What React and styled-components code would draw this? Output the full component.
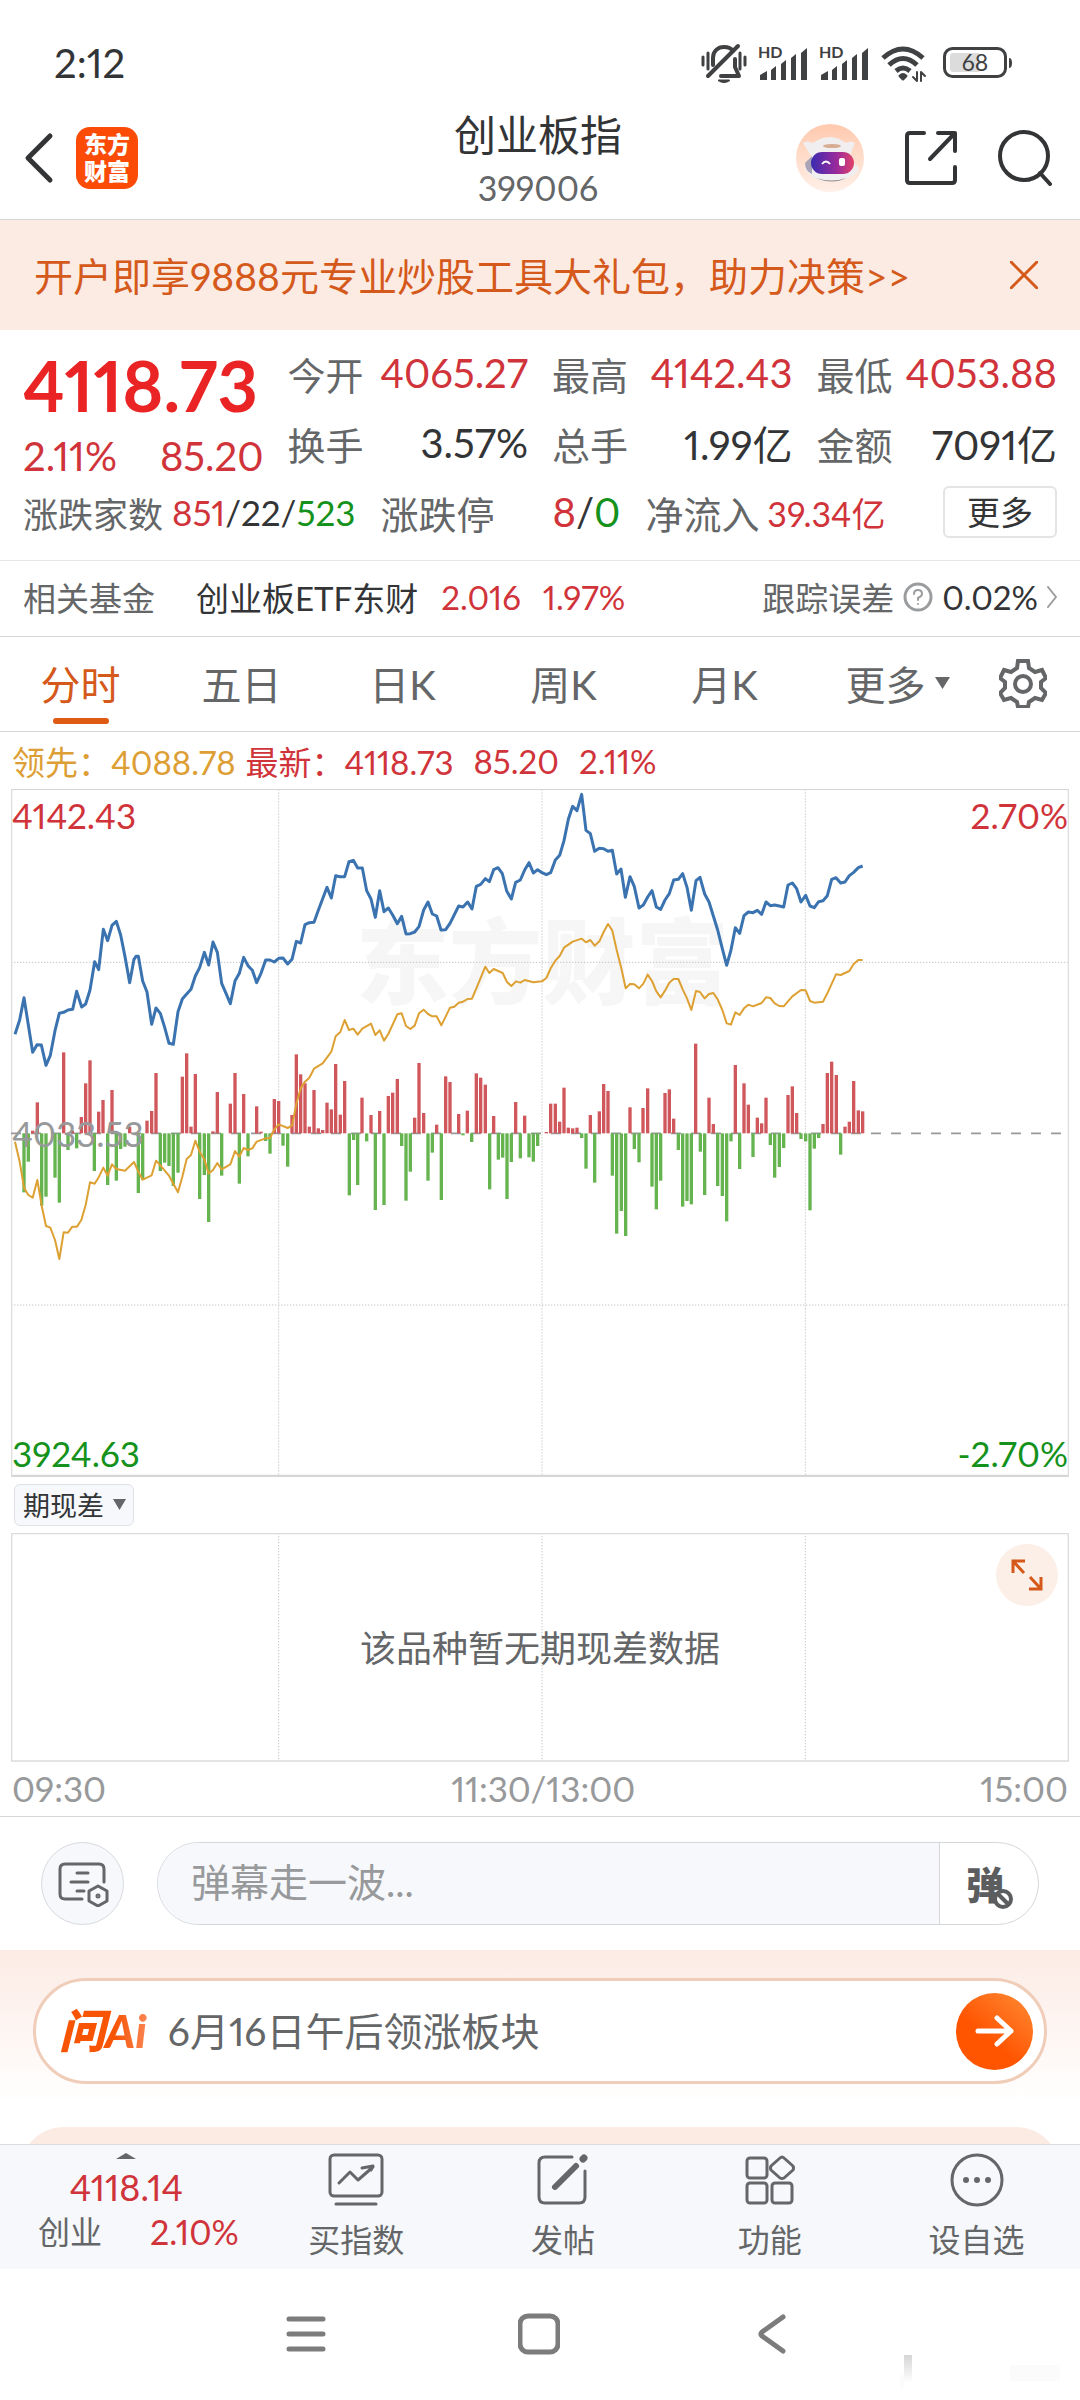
import React from 'react';
import styled, { createGlobalStyle, css } from 'styled-components';

const color = {
  text: '#333436',
  secondary: '#646668',
  muted: '#97999b',
  red: '#d0343a',
  green: '#15921b',
  orange: '#d4591b',
  gold: '#dd9f35',
  line: '#d6d6d6',
  peach: '#fbebe3',
  bar: '#f6f8fb',
};

const GlobalStyle = createGlobalStyle`
  * { box-sizing: border-box; }
  body {
    margin: 0;
    background: #fff;
    color: ${color.text};
    font-family: Lato, 'Noto Sans CJK SC', sans-serif;
    font-variant-numeric: proportional-nums;
  }
  button, input {
    font: inherit;
    color: inherit;
    margin: 0;
    padding: 0;
    border: 0;
    background: none;
    outline: none;
  }
  button { cursor: pointer; }
  svg { display: block; flex: none; }
`;

const tone = css`
  color: ${({ $tone }) => color[$tone || 'text']};
`;

const Page = styled.div`
  width: 100%;
  overflow: hidden;
`;

/* status bar and header */

const StatusBar = styled.div`
  display: flex;
  align-items: center;
  justify-content: space-between;
  height: 96px;
  padding: 30px 68px 0 54px;
  font-size: 40px;
  line-height: 66px;
`;

const StatusIcons = styled.div`
  display: flex;
  align-items: center;
  gap: 11px;
`;

const Header = styled.header`
  display: grid;
  grid-template-columns: 1fr auto 1fr;
  align-items: center;
  height: 124px;
  padding: 0 28px 0 24px;
  border-bottom: 1px solid ${color.line};
`;

const HeaderSide = styled.div`
  display: flex;
  align-items: center;
  justify-content: ${({ $end }) => ($end ? 'flex-end' : 'flex-start')};
  gap: ${({ $end }) => ($end ? '40px' : '22px')};
`;

const Logo = styled.a`
  display: flex;
  flex-direction: column;
  align-items: center;
  justify-content: center;
  width: 62px;
  height: 62px;
  border-radius: 14px;
  background: #fb4b06;
  color: #fff;
  font-size: 23px;
  font-weight: 900;
  line-height: 27px;
  text-decoration: none;
`;

const Title = styled.div`
  padding-top: 4px;
  text-align: center;

  h1 {
    margin: 0;
    font-size: 42px;
    font-weight: 400;
    line-height: 56px;
  }
  span {
    display: block;
    font-size: 34px;
    line-height: 50px;
    color: ${color.secondary};
  }
`;

const Banner = styled.div`
  display: flex;
  align-items: center;
  justify-content: space-between;
  height: 110px;
  padding: 0 42px 0 34px;
  background: ${color.peach};
  color: ${color.orange};

  a {
    padding-bottom: 3px;
    color: inherit;
    font-size: 39px;
    text-decoration: none;
    white-space: nowrap;
  }
`;

/* quote figures */

const Quote = styled.section`
  padding: 8px 23px 14px;
  border-bottom: 1px solid #e6e6e6;
`;

const QuoteGrid = styled.div`
  display: grid;
  grid-template-columns: repeat(4, 1fr);
  grid-auto-rows: 70px;
  column-gap: 24px;
`;

const Price = styled.div`
  grid-row: span 2;
  color: ${color.red};

  strong {
    display: block;
    font-size: 70px;
    line-height: 94px;
    color: #ea2424;
  }
  div {
    display: flex;
    justify-content: space-between;
    font-size: 40px;
    line-height: 48px;
  }
`;

const Stat = styled.div`
  display: flex;
  align-items: center;
  justify-content: space-between;
  font-size: ${({ $small }) => ($small ? '35px' : '38px')};
  white-space: nowrap;
  ${({ $fixed }) => $fixed && 'width: 240px;'}
`;

const Label = styled.span`
  color: ${color.secondary};
  ${({ $small }) => $small && 'font-size: 32px;'}
`;

const Value = styled.span`
  font-size: ${({ $small }) => ($small ? '34px' : '40px')};
  ${tone}
`;

const QuoteRow = styled.div`
  display: flex;
  align-items: center;
  gap: 25px;
  height: 68px;
`;

const MoreButton = styled.button`
  width: 114px;
  height: 52px;
  margin-left: auto;
  border: 2px solid #e4e4e6;
  border-radius: 6px;
  font-size: 33px;
  line-height: 46px;
`;

const FundRow = styled.a`
  display: flex;
  align-items: center;
  height: 76px;
  padding: 0 22px 3px 23px;
  border-bottom: 1px solid ${color.line};
  font-size: 33px;
  color: ${color.text};
  text-decoration: none;
  white-space: nowrap;
`;

const FundName = styled.span`
  margin: 0 23px 0 41px;
`;

const FundError = styled.span`
  display: flex;
  align-items: center;
  gap: 9px;
  margin-left: auto;
`;

const Num = styled.span`
  ${tone}
  margin-right: ${({ $gap }) => $gap || 0}px;
`;

/* period tabs */

const Tabs = styled.nav`
  display: grid;
  grid-template-columns: repeat(5, 161fr) 185fr 66fr;
  height: 95px;
  padding-right: 24px;
  border-bottom: 1px solid ${color.line};
`;

const Tab = styled.button`
  position: relative;
  display: flex;
  align-items: center;
  justify-content: center;
  gap: 9px;
  padding-bottom: 3px;
  font-size: 40px;
  white-space: nowrap;
  color: ${({ $active }) => ($active ? color.orange : color.secondary)};

  &::after {
    content: '';
    display: ${({ $active }) => ($active ? 'block' : 'none')};
    position: absolute;
    bottom: 7px;
    width: 56px;
    height: 6px;
    border-radius: 3px;
    background: #df5a12;
  }
`;

const Legend = styled.div`
  display: flex;
  align-items: center;
  height: 57px;
  padding: 0 12px;
  font-size: 33px;
  white-space: nowrap;
`;

/* charts */

const Chart = styled.div`
  position: relative;
  margin: 0 11px;

  > svg {
    width: 100%;
    height: auto;
  }
`;

const Mark = styled.span`
  position: absolute;
  font-size: 35px;
  line-height: 44px;
  ${tone}
  ${({ $at }) => $at}
`;

const IndicatorBar = styled.div`
  display: flex;
  align-items: center;
  height: 56px;
  padding: 0 14px;
`;

const Indicator = styled.button`
  display: flex;
  align-items: center;
  gap: 9px;
  height: 42px;
  padding: 0 7px 2px 8px;
  border: 1px solid #dfe1e5;
  border-radius: 6px;
  background: ${color.bar};
  font-size: 27px;
`;

const Empty = styled.p`
  position: absolute;
  inset: 0;
  display: flex;
  align-items: center;
  justify-content: center;
  margin: 0;
  padding-bottom: 4px;
  font-size: 36px;
  color: ${color.secondary};
`;

const Expand = styled.button`
  position: absolute;
  top: 11px;
  right: 11px;
  display: grid;
  place-items: center;
  width: 62px;
  height: 62px;
  border-radius: 50%;
  background: #fcefe7;
`;

const TimeAxis = styled.div`
  display: flex;
  align-items: center;
  justify-content: space-between;
  height: 55px;
  padding: 0 12px 2px;
  border-bottom: 1px solid ${color.line};
  font-size: 35px;
  color: ${color.muted};
`;

/* comments and assistant */

const CommentRow = styled.form`
  display: flex;
  gap: 33px;
  height: 133px;
  padding: 25px 41px 0;
`;

const RoundButton = styled.button`
  display: grid;
  place-items: center;
  flex: none;
  width: 83px;
  height: 83px;
  border: 1px solid #d8dae0;
  border-radius: 50%;
  background: ${color.bar};
`;

const CommentBox = styled.div`
  display: flex;
  flex: 1;
  height: 83px;
  border: 1px solid #d4d8dc;
  border-radius: 42px;
  overflow: hidden;

  input {
    flex: 1;
    min-width: 0;
    padding: 0 0 4px 33px;
    background: ${color.bar};
    font-size: 39px;
  }
  input::placeholder {
    color: ${color.muted};
    opacity: 1;
  }
  button {
    position: relative;
    width: 99px;
    padding-right: 8px;
    border-left: 1px solid ${color.line};
    font-size: 38px;
    font-weight: 900;
    line-height: 72px;
    color: #5b5d5f;
  }
  svg {
    position: absolute;
    right: 24px;
    bottom: 14px;
  }
`;

const Assistant = styled.section`
  height: 194px;
  padding: 28px 33px 0;
  background: linear-gradient(#fcebe4, #fff 80%);
  overflow: hidden;
`;

const Ask = styled.a`
  display: flex;
  align-items: center;
  height: 106px;
  padding: 0 11px 0 23px;
  border: 3px solid #f0cdb9;
  border-radius: 53px;
  background: #fff;
  color: ${color.secondary};
  font-size: 39px;
  text-decoration: none;
`;

const AskLogo = styled.b`
  padding-right: 4px;
  margin-right: 17px;
  background: linear-gradient(90deg, #f75403 60%, #fb8a5c);
  background-clip: text;
  color: transparent;
  font-size: 46px;
  font-style: italic;
  font-weight: 900;
  line-height: 60px;
`;

const AskText = styled.span`
  padding-bottom: 4px;
`;

const Go = styled.span`
  display: grid;
  place-items: center;
  width: 77px;
  height: 77px;
  margin-left: auto;
  border-radius: 50%;
  background: linear-gradient(40deg, #ff5400 40%, #ff8c36);
`;

const NextCard = styled.div`
  height: 60px;
  margin: 43px -13px 0;
  border-radius: 44px 44px 0 0;
  background: ${color.peach};
`;

/* bottom bars */

const BottomBar = styled.nav`
  display: grid;
  grid-template-columns: 253fr repeat(4, 207fr);
  height: 125px;
  border-top: 1px solid #d9dce0;
  background: ${color.bar};
`;

const Ticker = styled.button`
  display: flex;
  flex-direction: column;
  align-items: center;
  padding: 8px 14px 0 38px;
  color: ${color.red};

  b {
    width: 100%;
    padding-right: 24px;
    margin-top: 5px;
    font-size: 36px;
    font-weight: 400;
    line-height: 46px;
  }
  svg {
    margin-right: 24px;
  }
  div {
    display: flex;
    justify-content: space-between;
    width: 100%;
    font-size: 34px;
    line-height: 44px;
  }
`;

const Action = styled.button`
  display: flex;
  flex-direction: column;
  align-items: center;
  gap: 9px;
  padding-top: 8px;
  font-size: 32px;
  line-height: 48px;
  color: ${color.secondary};
`;

const SystemNav = styled.div`
  position: relative;
  display: flex;
  align-items: center;
  justify-content: space-between;
  height: 130px;
  padding: 0 286px 0 284px;
`;

const Smudge = styled.div`
  position: absolute;
  right: 10px;
  bottom: 6px;
`;

const Stroke = ({ w, h = w, box, sw = 3, stroke = color.secondary, children }) => (
  <svg width={w} height={h} viewBox={box || `0 0 ${w} ${h}`} fill="none" stroke={stroke}
    strokeWidth={sw} strokeLinecap="round" strokeLinejoin="round" aria-hidden="true">
    {children}
  </svg>
);

const BellOff = () => (
  <Stroke w={46} h={40} sw={4} stroke="#3f4143">
    <path d="M2 14v8M7 10v16M39 10v16M44 14v8" strokeWidth="3" />
    <path d="M12 22V15C12 8 17 4 23 4c4 0 7 1 9 4M34 16v8l4 9H20" />
    <path d="M37 3L7 33" />
    <path d="M18 37.500h10q-5 3-10 0" strokeWidth="2" fill="#3f4143" />
  </Stroke>
);

const Signal = () => (
  <svg width="50" height="48" viewBox="0 -5 50 48" fill="#3f4143" aria-hidden="true">
    <text x="0" y="14" fontSize="16" fontWeight="700" fontFamily="Lato, sans-serif">HD</text>
    <path d="M2 36v-5l7-4v9zM13 36V26l5-4v14zM23 36V20l5-4v20zM33 36V14l5-4v26zM43 36V9l6-5v32z" />
  </svg>
);

const Wifi = () => (
  <Stroke w={52} h={40} sw={5} stroke="#3f4143">
    <path d="M3 15Q23-3 43 15M9 22Q23 9 37 22M16 28q7-6 14 0" strokeLinecap="butt" />
    <path d="M20 33q3-3 6 0l-3 3z" strokeWidth="3" fill="#3f4143" />
    <path d="M37 29v9l-4-4M41 38v-9l4 4" strokeWidth="2" />
  </Stroke>
);

const Battery = () => (
  <svg width="69" height="32" viewBox="0 0 69 32" aria-hidden="true">
    <rect x="1.500" y="1.500" width="61" height="28" rx="8" fill="#fff" stroke="#3f4143" strokeWidth="3" />
    <path d="M10 6h26v19H10q-3 0-3-3V9q0-3 3-3z" fill="#dcdcdc" />
    <path d="M66 11q3 0 3 5t-3 5z" fill="#3f4143" />
    <text x="32" y="24" textAnchor="middle" fontSize="23" fontFamily="Lato, sans-serif" fill="#3f4143">68</text>
  </svg>
);

const Robot = () => (
  <svg width="68" height="70" viewBox="0 0 68 70" aria-hidden="true">
    <defs>
      <linearGradient id="visor"><stop offset="0" stopColor="#3a2bb0" /><stop offset=".6" stopColor="#9a2a9c" /><stop offset="1" stopColor="#e0436a" /></linearGradient>
      <linearGradient id="halo" x2="0" y2="1"><stop offset="0" stopColor="#ffc9ae" /><stop offset="1" stopColor="#fff0e8" /></linearGradient>
    </defs>
    <circle cx="34" cy="35" r="34" fill="url(#halo)" />
    <path d="M7 20q4-3 10 0 17-12 33 0 5-3 9 0l-3 7-2 8 8 9q2 4-3 7-8 7-25 7-16 0-22-8-5-4-3-8l6-9z" fill="#f1eeef" />
    <ellipse cx="36" cy="23" rx="9" ry="2" fill="#d6ac92" />
    <path d="M9 40l7-7v18q-7-3-7-11z" fill="#a9a4b6" />
    <rect x="15" y="29" width="43" height="22" rx="11" fill="url(#visor)" />
    <path d="M26 41q4-5 8 0" fill="none" stroke="#fff" strokeWidth="2" />
    <rect x="43" y="35" width="6" height="8" rx="2" fill="#fff" />
    <path d="M20 55q16 5 30 0-13 7-30 0z" fill="#8f8b94" />
  </svg>
);

const Caret = ({ w = 15, h = 12, up }) => (
  <svg width={w} height={h} viewBox="0 0 10 10" preserveAspectRatio="none" fill={color.secondary} aria-hidden="true">
    <path d={up ? 'M0 10h10L5 0z' : 'M0 0h10L5 10z'} />
  </svg>
);

// The plot uses three units for one pixel; the second half of a series starts at x = 1260.
const SPLIT = 1260;
const pairs = (str) => str.trim().split(/\s+/).map((p) => p.split(',').map(Number));
const series = (early, late) => [
  ...pairs(early),
  ...pairs(late).map(([x, y]) => [x + SPLIT, y]),
];

const priceLine = series(
  `45,763 59,720 72,653 98,817 111,794 124,795 138,856 151,826 165,752 178,700 191,697 204,690 218,688 230,634 245,681
   257,672 270,630 284,545 296,569 310,448 323,482 336,436 349,424 362,465 375,530 389,608 402,538 408,529 415,529
   428,603 441,636 455,733 468,684 481,700 494,742 507,790 520,793 534,695 547,657 560,642 573,628 586,588 599,563
   613,517 626,555 639,486 652,517 665,610 678,640 691,671 705,603 718,580 731,532 744,557 757,571 770,608 783,580
   797,540 810,540 823,546 836,535 849,534 863,552 876,538 889,484 902,489 915,434 928,428 942,427 955,391 968,356
   981,322 994,354 1007,287 1020,290 1034,290 1047,245 1060,241 1073,264 1087,264 1100,332 1113,357 1126,412 1139,332
   1152,395 1165,384 1178,405 1192,431 1205,409 1218,462 1231,461 1244,456 1257,440 1271,390 1284,366 1297,402
   1310,408 1323,450`,
  `77,449 90,430 116,378 129,381 143,366 156,387 169,319 182,313 196,296 208,305 221,269 234,263 247,281 260,333
   274,357 287,307 301,300 314,270 327,248 340,279 353,269 366,278 379,284 392,278 406,240 419,226 432,182 445,118
   458,79 471,92 485,43 498,151 511,161 524,214 538,205 551,206 564,214 577,211 590,282 603,267 616,352 630,290
   643,320 657,384 670,375 683,351 696,332 709,381 722,388 735,360 748,341 761,300 775,298 788,281 801,322 814,391
   828,302 840,292 854,342 867,366 880,408 893,450 906,502 920,556 933,510 946,443 959,460 972,407 985,396 999,398
   1012,391 1025,403 1038,366 1051,377 1064,375 1078,378 1091,381 1104,315 1117,309 1130,326 1143,366 1157,346
   1170,378 1183,383 1196,365 1209,362 1222,347 1235,298 1248,293 1262,309 1275,306 1288,287 1301,277 1315,263 1328,258`
);

const leadLine = series(
  `45,1085 59,1145 72,1223 85,1245 98,1253 112,1200 125,1277 138,1338 151,1343 165,1380 178,1437 191,1357 204,1358
   217,1340 231,1340 244,1320 257,1275 270,1207 284,1211 297,1190 310,1163 323,1187 336,1153 349,1167 375,1172
   402,1146 415,1175 428,1199 455,1186 468,1142 481,1156 507,1187 534,1237 547,1190 560,1137 573,1125 586,1082
   599,1115 613,1138 626,1180 639,1170 652,1149 665,1168 691,1153 705,1113 718,1130 731,1104 744,1110 757,1105
   770,1085 797,1075 810,1074 823,1048 836,1033 863,1044 876,1037 889,972 902,925 915,905 928,893 942,866 968,850
   994,815 1007,769 1021,756 1034,720 1047,750 1060,746 1073,764 1087,746 1113,731 1126,765 1139,751 1152,782
   1165,762 1192,703 1205,700 1218,738 1231,747 1244,737 1257,700 1271,689 1284,702 1297,709 1310,709 1324,736`,
  `77,710 90,683 103,680 116,668 129,665 143,657 156,656 169,625 196,560 208,579 221,567 248,579 261,606 274,618
   288,604 301,608 314,600 340,607 366,604 379,594 392,565 406,542 419,528 432,503 458,485 485,476 498,487 511,480
   524,497 538,484 551,456 564,432 577,452 590,510 604,565 617,625 630,612 643,613 657,625 670,611 683,584 696,603
   709,634 722,652 735,632 748,608 761,597 775,597 788,628 801,655 814,690 828,633 840,636 854,655 867,642 880,639
   893,658 907,690 920,730 933,734 946,697 959,705 972,685 985,674 999,679 1025,669 1038,652 1051,654 1064,670
   1078,678 1091,679 1117,649 1143,630 1157,631 1170,663 1183,668 1209,665 1222,640 1248,583 1262,585 1288,573
   1301,552 1315,540 1328,540`
);

const BASE = 1060;
const bars = series(
  `98,1052 112,967 191,817 217,1052 244,1011 257,910 270,841 296,995 309,960 336,930 389,1040 441,1022 455,993 468,879
   547,890 560,820 573,1040 586,882 639,1054 652,936 691,971 705,879 731,942 770,979 783,1055 823,957 836,963 876,1005
   889,823 902,883 915,910 928,1040 942,930 955,1045 968,1050 981,968 994,988 1007,852 1021,1004 1034,903 1086,953
   1113,1005 1139,993 1165,948 1178,938 1192,897 1244,1013 1257,849 1271,999 1310,1034 72,1237 85,1145 125,1277
   138,1250 165,1193 178,1268 204,1110 230,1105 283,1173 323,1215 349,1202 362,1107 375,1100 415,1239 428,1200
   481,1173 494,1148 507,1158 520,1218 534,1178 599,1257 613,1185 626,1326 665,1187 718,1211 744,1129 797,1083
   810,1121 849,1097 863,1160 1048,1246 1061,1080 1073,1215 1100,1084 1126,1290 1152,1275 1205,1098 1218,1262
   1231,1175 1284,1202 1297,1118`,
  `77,889 90,906 116,1002 142,992 169,880 182,893 196,914 221,1008 287,966 314,1007 379,1056 392,971 406,971 419,1025
   432,923 445,1043 458,1045 471,1043 511,1005 538,994 551,912 564,933 630,982 669,984 683,925 735,939 748,928
   761,1016 827,791 867,953 880,1032 946,855 972,910 985,974 1012,1013 1025,1030 1038,953 1104,945 1117,919 1130,999
   1209,1032 1222,879 1235,845 1249,885 1275,1040 1288,1025 1301,903 1315,991 1328,994 64,1260 129,1066 155,1086
   209,1228 235,1139 248,1133 261,1257 274,1146 301,1135 327,1132 340,1145 353,1098 485,1074 498,1166 524,1208
   577,1187 590,1361 604,1293 617,1368 643,1107 657,1147 696,1220 709,1288 722,1202 775,1110 788,1280 801,1263
   814,1273 841,1115 854,1245 893,1218 907,1248 920,1324 933,1084 959,1167 999,1131 1051,1095 1064,1193 1078,1161
   1091,1104 1143,1077 1157,1084 1170,1291 1183,1106 1196,1074 1262,1124`
);

const COLUMNS = [836, 1626, 2416];

const PriceChart = () => (
  <svg viewBox="33 27 3174 2064" aria-label="分时走势">
    <text x="1627" y="650" textAnchor="middle" fontSize="280" fontWeight="900"
      fontFamily="'Noto Sans CJK SC', sans-serif" fill="#f6f6f6">东方财富</text>
    <g stroke="#c4c4c4" strokeWidth="3" strokeDasharray="4 5">
      {COLUMNS.map((x) => <path key={x} d={`M${x} 28V2088`} />)}
      <path d="M33 547H3207M33 1575H3207" />
    </g>
    <path d="M33 2088H3207" stroke={color.line} strokeWidth="7" />
    <path d="M35 28V2088M3205 28V2088" stroke="#dedede" strokeWidth="4" />
    <path d="M33 28H3207" stroke={color.line} strokeWidth="4" />
    <path d={`M33 ${BASE}H3207`} stroke="#98989c" strokeWidth="5" strokeDasharray="30 30" />
    {bars.map(([x, y]) => (
      <path key={x} d={`M${x} ${BASE}V${y}`} stroke={y < BASE ? '#d0575b' : '#66b450'} strokeWidth="10" />
    ))}
    <polyline points={leadLine.join(' ')} fill="none" stroke="#dda032" strokeWidth="6" strokeLinejoin="round" />
    <polyline points={priceLine.join(' ')} fill="none" stroke="#3a73b0" strokeWidth="9" strokeLinejoin="round" />
  </svg>
);

const SpreadChart = () => (
  <svg viewBox="33 0 3174 687" aria-hidden="true">
    <g stroke="#c4c4c4" strokeWidth="3" strokeDasharray="4 5">
      {COLUMNS.map((x) => <path key={x} d={`M${x} 0V684`} />)}
    </g>
    <path d="M35 2H3205V684H35z" fill="none" stroke="#dcdcdc" strokeWidth="4" />
  </svg>
);

const STATS = [
  ['今开', '4065.27', 'red'],
  ['最高', '4142.43', 'red'],
  ['最低', '4053.88', 'red'],
  ['换手', '3.57%'],
  ['总手', '1.99亿'],
  ['金额', '7091亿'],
];

const PERIODS = ['分时', '五日', '日K', '周K', '月K'];

const ACTIONS = [
  {
    label: '买指数',
    icon: (
      <Stroke w={56} h={54}>
        <rect x="2" y="2" width="52" height="41" rx="4" />
        <path d="M11 30l11-11 8 8 15-13M34 15l11-2-2 4M8 51h40" />
      </Stroke>
    ),
  },
  {
    label: '发帖',
    icon: (
      <Stroke w={54} h={54}>
        <path d="M36 4H9q-6 0-6 6v34q0 6 6 6h34q6 0 6-6V18" />
        <path d="M40 13L19 34" strokeWidth="6" />
        <path d="M47 6l1-1" strokeWidth="7" />
      </Stroke>
    ),
  },
  {
    label: '功能',
    icon: (
      <Stroke w={50} h={54}>
        <rect x="2" y="5" width="20" height="20" rx="3" />
        <rect x="2" y="30" width="20" height="20" rx="3" />
        <rect x="27" y="30" width="20" height="20" rx="3" />
        <path d="M35 5q2-2 4 0l9 8q1 2 0 4l-9 8q-2 1-4 0l-9-8q-1-2 0-4z" />
      </Stroke>
    ),
  },
  {
    label: '设自选',
    icon: (
      <Stroke w={54} h={54}>
        <circle cx="27" cy="27" r="25" />
        <path d="M16 27h0M27 27h0M38 27h0" strokeWidth="6" />
      </Stroke>
    ),
  },
];

export default function App() {
  return (
    <Page>
      <GlobalStyle />
      <StatusBar>
        <span>2:12</span>
        <StatusIcons>
          <BellOff />
          <Signal />
          <Signal />
          <Wifi />
          <Battery />
        </StatusIcons>
      </StatusBar>

      <Header>
        <HeaderSide>
          <button aria-label="返回">
            <Stroke w={30} h={52} sw={5} stroke="#333436"><path d="M26 4L4 26l22 22" /></Stroke>
          </button>
          <Logo href="#home"><span>东方</span><span>财富</span></Logo>
        </HeaderSide>
        <Title>
          <h1>创业板指</h1>
          <span>399006</span>
        </Title>
        <HeaderSide $end>
          <button aria-label="助手"><Robot /></button>
          <button aria-label="分享">
            <Stroke w={54} h={56} stroke="#333436" sw={4}>
              <path d="M20 3H6q-3 0-3 3v44q0 3 3 3h42q3 0 3-3V37M34 3h17v18M51 3L26 29" />
            </Stroke>
          </button>
          <button aria-label="搜索">
            <Stroke w={54} h={56} stroke="#333436" sw={4}>
              <circle cx="26" cy="26" r="24" />
              <path d="M42 43l10 11" />
            </Stroke>
          </button>
        </HeaderSide>
      </Header>

      <Banner>
        <a href="#gift">开户即享9888元专业炒股工具大礼包，助力决策&gt;&gt;</a>
        <button aria-label="关闭">
          <Stroke w={28} stroke={color.orange}><path d="M1 1l26 26M27 1L1 27" /></Stroke>
        </button>
      </Banner>

      <Quote>
        <QuoteGrid>
          <Price>
            <strong>4118.73</strong>
            <div><span>2.11%</span><span>85.20</span></div>
          </Price>
          {STATS.map(([label, value, t]) => (
            <Stat key={label}>
              <Label>{label}</Label>
              <Value $tone={t}>{value}</Value>
            </Stat>
          ))}
        </QuoteGrid>
        <QuoteRow>
          <Stat $small>
            <Label>涨跌家数&nbsp;</Label>
            <span>
              <Num $tone="red">851</Num>/22/<Num $tone="green">523</Num>
            </span>
          </Stat>
          <Stat $fixed>
            <Label>涨跌停</Label>
            <Value>
              <Num $tone="red">8</Num>/<Num $tone="green">0</Num>
            </Value>
          </Stat>
          <Stat $fixed>
            <Label>净流入</Label>
            <Value $small $tone="red">39.34亿</Value>
          </Stat>
          <MoreButton>更多</MoreButton>
        </QuoteRow>
      </Quote>

      <FundRow href="#fund">
        <Label>相关基金</Label>
        <FundName>创业板ETF东财</FundName>
        <Num $tone="red" $gap={22}>2.016</Num>
        <Num $tone="red">1.97%</Num>
        <FundError>
          <Label>跟踪误差</Label>
          <Stroke w={30} stroke="#9a9c9e">
            <circle cx="15" cy="15" r="13" />
            <path d="M11 12q0-4 4-4t4 4q0 2-4 4v2M15 22h0" strokeWidth="2" />
          </Stroke>
          <span>0.02%</span>
          <Stroke w={11} h={22} stroke="#9a9c9e" sw={2}><path d="M1 1l8 10-8 10" /></Stroke>
        </FundError>
      </FundRow>

      <Tabs>
        {PERIODS.map((p, i) => <Tab key={p} $active={i === 0}>{p}</Tab>)}
        <Tab>更多<Caret /></Tab>
        <Tab aria-label="设置">
          <Stroke w={48} h={50} sw={4}>
            <path d="M19 3h10l1 7 6 4 7-2 4 8-5 4v6l5 5-4 7-7-2-6 4-1 5H19l-1-5-6-4-7 2-4-7 5-5v-6l-5-4 4-8 7 2 6-4z" strokeLinejoin="miter" />
            <circle cx="24" cy="26" r="8" />
          </Stroke>
        </Tab>
      </Tabs>

      <Legend>
        <Num $tone="gold" $gap={10}>领先：4088.78</Num>
        <Num $tone="red" $gap={20}>最新：4118.73</Num>
        <Num $tone="red" $gap={20}>85.20</Num>
        <Num $tone="red">2.11%</Num>
      </Legend>

      <Chart>
        <PriceChart />
        <Mark $tone="red" $at="top: 4px; left: 1px;">4142.43</Mark>
        <Mark $tone="red" $at="top: 4px; right: 1px;">2.70%</Mark>
        <Mark $tone="muted" $at="top: calc(50% - 22px); left: 1px;">4033.53</Mark>
        <Mark $tone="green" $at="bottom: 2px; left: 1px;">3924.63</Mark>
        <Mark $tone="green" $at="bottom: 2px; right: 1px;">-2.70%</Mark>
      </Chart>

      <IndicatorBar>
        <Indicator>期现差<Caret w={13} h={11} /></Indicator>
      </IndicatorBar>

      <Chart>
        <SpreadChart />
        <Empty>该品种暂无期现差数据</Empty>
        <Expand aria-label="全屏">
          <Stroke w={32} stroke={color.orange} sw={3}>
            <path d="M2 14V2h12M2 2l11 12M30 18v12H18M30 30L19 18" strokeLinecap="butt" strokeLinejoin="miter" />
          </Stroke>
        </Expand>
      </Chart>
      <TimeAxis>
        <span>09:30</span>
        <span>11:30/13:00</span>
        <span>15:00</span>
      </TimeAxis>

      <CommentRow>
        <RoundButton type="button" aria-label="弹幕设置">
          <Stroke w={52} h={46}>
            <path d="M25 38H8q-5 0-5-5V8q0-5 5-5h34q5 0 5 5v13M20 12h11M14 21h17M20 30h7" />
            <path d="M41 25l9 5v10l-9 5-9-5V30z" />
            <circle cx="41" cy="35" r="1" />
          </Stroke>
        </RoundButton>
        <CommentBox>
          <input aria-label="弹幕" placeholder="弹幕走一波..." />
          <button type="button" aria-label="关闭弹幕">
            弹
            <svg width="22" height="22" viewBox="0 0 22 22" fill="#fff" stroke="#5b5d5f" strokeWidth="4">
              <circle cx="11" cy="11" r="8" />
              <path d="M6 6l10 10" />
            </svg>
          </button>
        </CommentBox>
      </CommentRow>

      <Assistant>
        <Ask href="#ask">
          <AskLogo>问Ai</AskLogo>
          <AskText>6月16日午后领涨板块</AskText>
          <Go>
            <Stroke w={40} h={34} stroke="#fff" sw={5}><path d="M3 17h33M22 4l14 13-14 13" /></Stroke>
          </Go>
        </Ask>
        <NextCard />
      </Assistant>

      <BottomBar>
        <Ticker>
          <Caret w={20} h={6} up />
          <b>4118.14</b>
          <div><Label $small>创业</Label><span>2.10%</span></div>
        </Ticker>
        {ACTIONS.map(({ label, icon }) => (
          <Action key={label}>
            {icon}
            {label}
          </Action>
        ))}
      </BottomBar>

      <SystemNav>
        <button aria-label="菜单">
          <Stroke w={44} h={38} sw={5} stroke="#7c7c7c"><path d="M5 4h34M5 19h34M5 34h34" /></Stroke>
        </button>
        <button aria-label="主页">
          <Stroke w={42} sw={5} stroke="#7c7c7c"><rect x="2" y="3" width="38" height="36" rx="8" /></Stroke>
        </button>
        <button aria-label="后退">
          <Stroke w={44} h={42} box="-7 0 44 42" sw={5} stroke="#7c7c7c"><path d="M26 4L5 19q-2 2 0 4l21 15" /></Stroke>
        </button>
        <Smudge>
          <svg width="170" height="40" viewBox="0 0 170 40" aria-hidden="true">
            <defs>
              <linearGradient id="fade" x2="0" y2="1"><stop offset="0" stopColor="#d5d5d5" /><stop offset="1" stopColor="#fff" /></linearGradient>
            </defs>
            <rect x="4" y="2" width="8" height="28" fill="url(#fade)" />
            <path d="M0 22h4v14H0zM110 12h50v16h-50z" fill="#fbfbfb" />
          </svg>
        </Smudge>
      </SystemNav>
    </Page>
  );
}
